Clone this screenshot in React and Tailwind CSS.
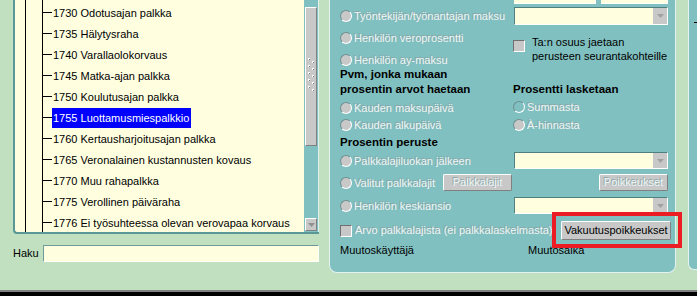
import React from 'react';

const rows = [
  '1730 Odotusajan palkka',
  '1735 Hälytysraha',
  '1740 Varallaolokorvaus',
  '1745 Matka-ajan palkka',
  '1750 Koulutusajan palkka',
  '1755 Luottamusmiespalkkio',
  '1760 Kertausharjoitusajan palkka',
  '1765 Veronalainen kustannusten kovaus',
  '1770 Muu rahapalkka',
  '1775 Verollinen päiväraha',
  '1776 Ei työsuhteessa olevan verovapaa korvaus',
];

// disabled (embossed) text look
const dis = 'text-[#eef6f6] [text-shadow:-1px_-1px_0_#8aa6a6]';

function Radio({ hollow }) {
  return (
    <span
      className={`inline-block shrink-0 w-[12px] h-[12px] rounded-full border border-t-[#6f8f8f] border-l-[#6f8f8f] border-b-white border-r-white ${
        hollow ? 'bg-transparent' : 'bg-[#c8c8c8]'
      }`}
    ></span>
  );
}

function Check() {
  return (
    <span className="inline-block shrink-0 w-[12px] h-[12px] bg-[#c8c8c8] border border-t-[#707070] border-l-[#707070] border-b-white border-r-white"></span>
  );
}

function RadioRow({ label, hollow, className = '' }) {
  return (
    <div className={`flex items-center gap-[2px] h-[14px] ${className}`}>
      <Radio hollow={hollow} />
      <span className={`leading-[14px] whitespace-nowrap ${dis}`}>{label}</span>
    </div>
  );
}

function Select({ h = 'h-[17px]' }) {
  return (
    <div className={`flex w-[154px] ${h} bg-[#ffffe0] border border-t-[#4f8080] border-l-[#4f8080] border-b-white border-r-white`}>
      <div className="flex-1"></div>
      <div className="w-[14px] bg-[#c8c8c8] flex items-center justify-center">
        <svg width="7" height="4" viewBox="0 0 7 4">
          <path d="M0 0h7L3.5 4z" fill="#a0a0a0" />
        </svg>
      </div>
    </div>
  );
}

function Btn({ children, disabled, className = '' }) {
  return (
    <div
      className={`flex items-center justify-center bg-[#c8c8c8] rounded-[2px] border border-t-white border-l-white border-b-[#808080] border-r-[#808080] whitespace-nowrap ${
        disabled ? dis : 'text-black'
      } ${className}`}
    >
      {children}
    </div>
  );
}

function Gripper() {
  const dots = [];
  for (let i = 0; i < 5; i++) {
    dots.push(<rect key={'a' + i} x="1" y={1 + i * 7} width="2" height="2" fill="#ffffff" />);
    dots.push(<rect key={'b' + i} x="2" y={2 + i * 7} width="1" height="1" fill="#808080" />);
    dots.push(<rect key={'c' + i} x="5" y={4 + i * 7} width="2" height="2" fill="#ffffff" />);
    dots.push(<rect key={'d' + i} x="6" y={5 + i * 7} width="1" height="1" fill="#808080" />);
  }
  return (
    <svg width="8" height="36" viewBox="0 0 8 36">
      {dots}
    </svg>
  );
}

export default function App() {
  return (
    <div className="w-[697px] h-[296px] overflow-hidden bg-[#c0e0c0] relative font-['Liberation_Sans',Arial,sans-serif] text-[11px] text-black">
      <div className="flex h-[290px]">
        {/* Left: tree list + search */}
        <div className="w-[329px] pl-[13px] pr-[10px] flex flex-col">
          <div className="h-[234px] flex bg-[#ffffe0] border-l-2 border-b-2 border-[#5a9898] rounded-bl-[4px] overflow-hidden">
            <div className="flex-1 pl-[10px]">
              <div className="h-full border-l border-black pl-[16px]">
                <div className="h-full border-l border-black pt-[2px]">
                  {rows.map((r, i) => (
                    <div key={r} className="flex items-center h-[21px]">
                      <span className="w-[9px] h-px bg-black"></span>
                      <span
                        className={`pl-[1px] pr-[2px] h-[20px] leading-[20px] whitespace-nowrap ${
                          i === 5 ? 'bg-[#0000ff] text-white' : ''
                        }`}
                      >
                        {r}
                      </span>
                    </div>
                  ))}
                </div>
              </div>
            </div>
            <div className="w-[15px] bg-[#80c0c0] border-r border-[#e0f0f0] flex flex-col pl-[1px] pr-[1px]">
              <div className="mt-[7px] h-[139px] bg-[#c8c8c8] border border-t-white border-l-white border-b-[#808080] border-r-[#808080] flex items-start justify-center pt-[49px]">
                <Gripper />
              </div>
              <div className="flex-1"></div>
              <div className="mb-[1px] h-[13px] bg-[#c8c8c8] border border-t-white border-l-white border-b-[#808080] border-r-[#808080] flex items-center justify-center">
                <svg width="7" height="4" viewBox="0 0 7 4">
                  <path d="M0 0h7L3.5 4z" fill="#909090" />
                </svg>
              </div>
            </div>
          </div>
          <div className="mt-[11px] h-[17px] flex items-center justify-between">
            <span>Haku</span>
            <div className="w-[276px] h-[17px] bg-[#ffffe0] border border-t-[#6f9a9a] border-l-[#6f9a9a] border-b-white border-r-white rounded-[1px]"></div>
          </div>
        </div>

        {/* Right panel */}
        <div className="w-[347px] h-[273px] bg-[#80c0c0] rounded-b-[8px] border-l border-r border-b border-[#e4f2f2] pl-[10px] flex flex-col">
          <div className="flex h-[150px]">
            {/* left column */}
            <div className="w-[173px] flex flex-col pt-[9px]">
              <RadioRow label="Työntekijän/työnantajan maksu" />
              <RadioRow label="Henkilön veroprosentti" className="mt-[8px]" />
              <RadioRow label="Henkilön ay-maksu" className="mt-[8px]" />
              <div className="font-bold text-[11.5px] leading-[15px]">
                Pvm, jonka mukaan
                <br />
                prosentin arvot haetaan
              </div>
              <RadioRow label="Kauden maksupäivä" className="mt-[4px]" />
              <RadioRow label="Kauden alkupäivä" className="mt-[3px]" />
              <div className="mt-[3px] font-bold text-[11.5px] leading-[15px]">Prosentin peruste</div>
            </div>
            {/* right column */}
            <div className="w-[156px] flex flex-col">
              <div className="flex ml-[1px] gap-[5px] h-[4px]">
                <div className="w-[82px] bg-[#ffffe0] border-b border-r border-white"></div>
                <div className="w-[67px] bg-[#ffffe0] border-b border-r border-white"></div>
              </div>
              <div className="mt-[3px] ml-[1px]">
                <Select h="h-[18px]" />
              </div>
              <div className="mt-[10px] flex items-start gap-[7px]">
                <span className="mt-[5px]">
                  <Check />
                </span>
                <span className="leading-[14px]">
                  Ta:n osuus jaetaan
                  <br />
                  perusteen seurantakohteille
                </span>
              </div>
              <div className="mt-[19px] font-bold text-[11.5px] leading-[15px]">Prosentti lasketaan</div>
              <RadioRow label="Summasta" hollow className="mt-[3px]" />
              <RadioRow label="À-hinnasta" className="mt-[4px]" />
            </div>
          </div>

          {/* lower rows */}
          <div className="mt-[2px] flex h-[17px] items-center">
            <div className="w-[173px]">
              <RadioRow label="Palkkalajiluokan jälkeen" />
            </div>
            <div className="ml-[1px]">
              <Select />
            </div>
          </div>
          <div className="mt-[5px] flex h-[17px] items-center">
            <div className="w-[173px] flex items-center">
              <RadioRow label="Valitut palkkalajit" />
              <Btn disabled className="ml-auto mr-[1px] w-[69px] h-[17px]">
                Palkkalajit
              </Btn>
            </div>
            <div className="w-[156px] flex">
              <Btn disabled className="ml-auto mr-[1px] w-[69px] h-[17px]">
                Poikkeukset
              </Btn>
            </div>
          </div>
          <div className="mt-[6px] flex h-[17px] items-center">
            <div className="w-[173px]">
              <RadioRow label="Henkilön keskiansio" />
            </div>
            <div className="ml-[1px]">
              <Select />
            </div>
          </div>
          <div className="mt-[7px] flex h-[19px] items-center">
            <div className="w-[221px] flex items-center gap-[3px]">
              <Check />
              <span className={`whitespace-nowrap ${dis}`}>Arvo palkkalajista (ei palkkalaskelmasta)</span>
            </div>
            <Btn className="w-[110px] h-[19px]">Vakuutuspoikkeukset</Btn>
          </div>
          <div className="mt-[3px] flex h-[14px] items-center">
            <span className="w-[188px]">Muutoskäyttäjä</span>
            <span>Muutosaika</span>
          </div>
        </div>

        <div className="w-[12px]"></div>
        <div className="flex-1 h-[270px] bg-[#80c0c0] rounded-bl-[6px] border-l border-b border-[#e4f2f2] pt-[22px] pl-[5px]">
          <div className="w-[3px] h-px bg-black"></div>
        </div>
      </div>
      <div className="h-[2px] bg-[#808080]"></div>
      <div className="h-[4px] bg-black"></div>

      {/* annotation highlight */}
      <div className="absolute left-[552px] top-[212px] w-[130px] h-[36px] border-4 border-[#ec1c24]"></div>
    </div>
  );
}
